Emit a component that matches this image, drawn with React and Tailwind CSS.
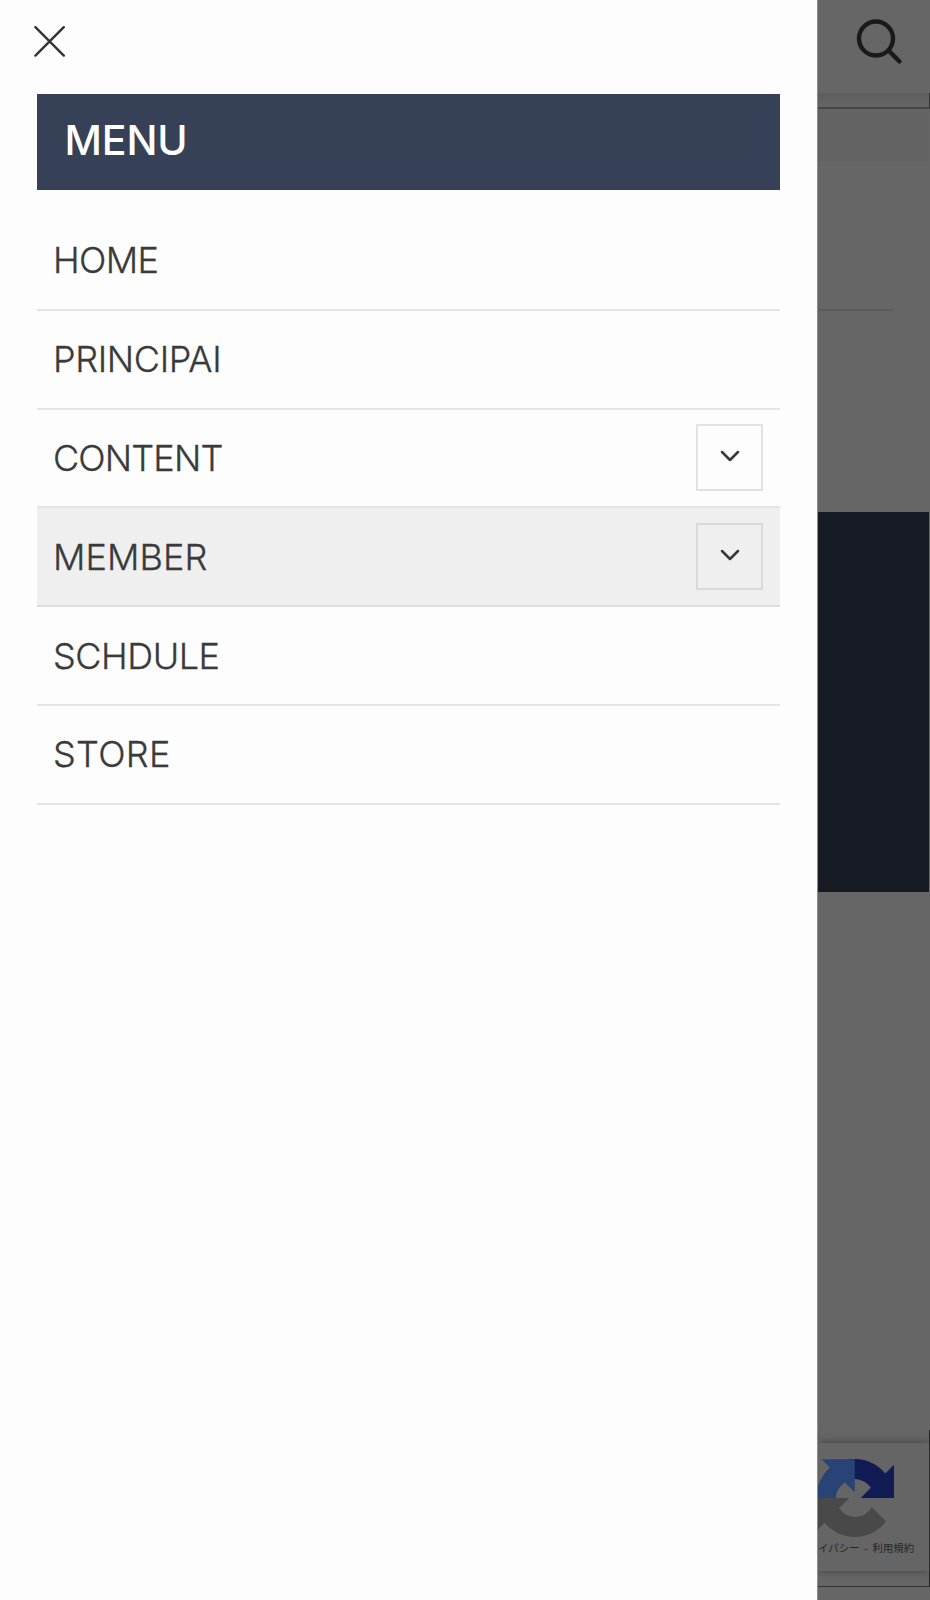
import React from "react";

const items = [
  { label: "HOME", tracking: "tracking-[-0.6px]" },
  { label: "PRINCIPAI", tracking: "tracking-[-0.35px]" },
  { label: "CONTENT", tracking: "tracking-[-0.85px]", sub: true },
  { label: "MEMBER", tracking: "tracking-[0.1px]", sub: true, active: true },
  { label: "SCHDULE", tracking: "tracking-[-0.45px]" },
  { label: "STORE", tracking: "tracking-[0.3px]" },
];

function Row({ label, tracking, sub, active }) {
  return (
    <li
      className={`flex h-[98.8px] items-center justify-between border-b-2 pl-[16px] pr-[17px] ${
        active ? "border-[#dddddd] bg-[#efefef]" : "border-[#e4e4e4]"
      }`}
    >
      <span className={`text-[36px] font-light leading-none text-[#3a3a3a] [-webkit-text-stroke:0.3px_#3a3a3a] ${tracking}`}>
        {label}
      </span>
      {sub && (
        <button
          className={`flex size-[67px] items-center justify-center border-2 ${
            active ? "border-[#d9d9d9]" : "border-[#e2e2e2]"
          }`}
        >
          <svg width="20" height="12" viewBox="0 0 20 12" fill="none" stroke="#383838" strokeWidth="2.5" strokeLinecap="round" strokeLinejoin="round" className="mb-[3px]">
            <path d="M2 2l8 8 8-8" />
          </svg>
        </button>
      )}
    </li>
  );
}

export default function App() {
  return (
    <div className="flex h-[1600px] w-[930px] overflow-hidden bg-[#666] font-['Inter','Noto_Sans_CJK_JP',sans-serif]">
      <aside className="h-full w-[817px] shrink-0 bg-[#fdfdfd] pl-[37px] pr-[37px]">
        <div className="flex h-[94px] items-start pt-[26px]">
          <svg width="31" height="31" viewBox="0 0 31 31" fill="none" stroke="#333" strokeWidth="2.4" strokeLinecap="round" className="-ml-[3px]">
            <path d="M1.4 1.2l28.4 28.4M29.8 1.2L1.4 29.6" />
          </svg>
        </div>
        <h2 className="flex h-24 items-center bg-[#364056] pb-[3px] pl-[27.5px] text-[41px] font-medium leading-none tracking-[-0.1px] text-white">
          MENU
        </h2>
        <ul className="pt-[22px]">
          {items.map((it) => (
            <Row key={it.label} {...it} />
          ))}
        </ul>
      </aside>

      <main className="flex w-[113px] flex-col overflow-hidden border-l border-[#8c8c8c]">
        <div className="flex h-[93px] items-start pl-[37.5px] pt-[18px]">
          <svg width="47" height="47" viewBox="0 0 47 47" fill="none" stroke="#1a1a1a" strokeWidth="4.4" strokeLinecap="round">
            <circle cx="20" cy="20.5" r="17" />
            <path d="M33 33l10.5 10.5" />
          </svg>
        </div>
        <div className="h-[16px] border-b-2 border-r border-[#464646] border-r-[#333] bg-gradient-to-b from-[#5e5e5e] to-[#656565]" />
        <div className="mr-px h-[52px] bg-[#636363]" />
        <div className="h-[351px] pr-[37px] pt-[148px]">
          <div className="h-[2px] bg-[#5c5c5c]" />
        </div>
        <div className="mr-px h-[380px] bg-[#171b24]" />
        <div className="h-[538px]" />
        <div className="h-[157px] border-b border-r border-[#333] border-r-[#222] pt-[13px]">
          <div className="h-[128px] bg-[#656565] pt-4 shadow-[0_0_8px_0_#404040]">
            <svg width="78" height="78" viewBox="0 0 64 64" className="-ml-[2px]">
              <path fill="#111c55" d="M64 31.955l-.033-1.37V4.687l-7.16 7.16C50.948 4.674 42.033.093 32.05.093c-10.4 0-19.622 4.96-25.458 12.64l11.736 11.86a15.55 15.55 0 0 1 4.754-5.334c2.05-1.6 4.952-2.906 8.968-2.906.485 0 .86.057 1.135.163 4.976.393 9.288 3.14 11.828 7.124l-8.307 8.307L64 31.955" />
              <path fill="#294377" d="M31.862.094l-1.37.033H4.594l7.16 7.16C4.58 13.147 0 22.06 0 32.046c0 10.4 4.96 19.622 12.64 25.458L24.5 45.768a15.55 15.55 0 0 1-5.334-4.754c-1.6-2.05-2.906-4.952-2.906-8.968 0-.485.057-.86.163-1.135.393-4.976 3.14-9.288 7.124-11.828l8.307 8.307L31.862.094" />
              <path fill="#494949" d="M.001 32.045l.033 1.37v25.898l7.16-7.16c5.86 7.173 14.774 11.754 24.76 11.754 10.4 0 19.622-4.96 25.458-12.64l-11.736-11.86a15.55 15.55 0 0 1-4.754 5.334c-2.05 1.6-4.952 2.906-8.968 2.906-.485 0-.86-.057-1.135-.163-4.976-.393-9.288-3.14-11.828-7.124l8.307-8.307L.001 32.045" />
            </svg>
            <p className="mt-[3px] whitespace-nowrap font-['Noto_Sans_CJK_JP',sans-serif] text-[10.5px] leading-[15px] text-[#262626] [word-spacing:2px]">
              イパシー - 利用規約
            </p>
          </div>
        </div>
      </main>
    </div>
  );
}
